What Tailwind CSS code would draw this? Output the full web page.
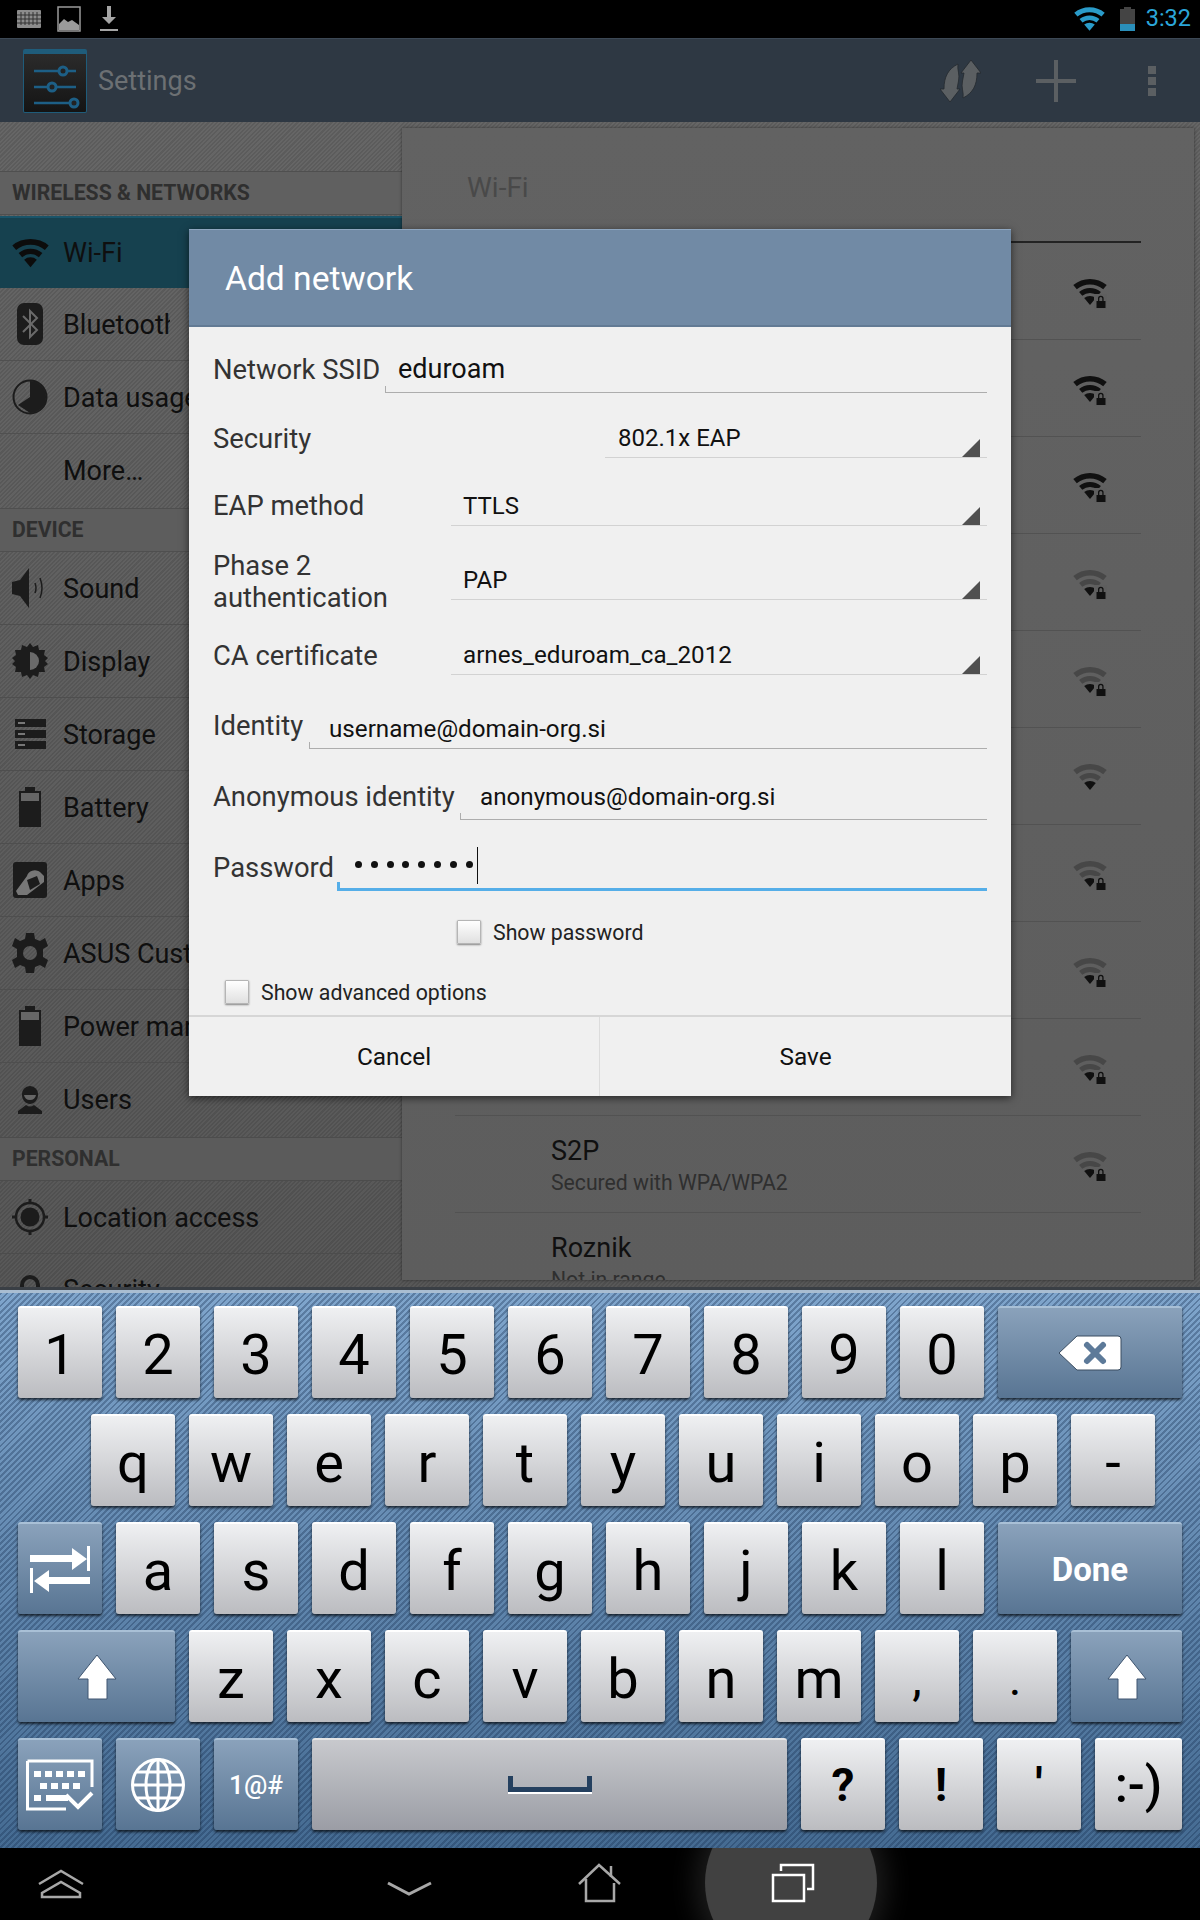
<!doctype html>
<html>
<head>
<meta charset="utf-8">
<script src="https://cdn.jsdelivr.net/npm/@tailwindcss/browser@4"></script>
<title>Add network</title>
</head>
<body class="m-0 bg-black">
<svg class="hidden" width="0" height="0">
  <symbol id="w-full" viewBox="0 0 34 26"><path d="M.3 6.1A26 26 0 0 1 33.7 6.1L30.2 10.3A20.5 20.5 0 0 0 3.8 10.3Z"/><path d="M6.1 13A17 17 0 0 1 27.9 13L24.7 16.8A12 12 0 0 0 9.3 16.8Z"/><path d="M11.2 19.1A9 9 0 0 1 22.8 19.1L17 26Z"/></symbol>
  <symbol id="w-lock" viewBox="0 0 34 30"><path fill="#101010" d="M.3 6.1A26 26 0 0 1 33.7 6.1L30.2 10.3A20.5 20.5 0 0 0 3.8 10.3Z"/><path fill="#101010" d="M6.1 13A17 17 0 0 1 27.900 13L24.700 16.800A12 12 0 0 0 9.300 16.800Z"/><path fill="#101010" d="M11.200 19.100A9 9 0 0 1 22.800 19.100L17 26Z"/><path fill="#5f5f5f" d="M21 15H34V30H21Z"/><path fill="#101010" d="M25 22V19.500a2.800 2.800 0 0 1 5.600 0V22H32.500V29H23.500V22ZM26.300 22H29.300V19.500a1.500 1.500 0 0 0-3 0Z"/></symbol>
  <symbol id="w-low" viewBox="0 0 34 30"><path fill="#474747" d="M.3 6.1A26 26 0 0 1 33.7 6.1L30.2 10.3A20.5 20.5 0 0 0 3.8 10.3Z"/><path fill="#474747" d="M6.1 13A17 17 0 0 1 27.9 13L24.7 16.8A12 12 0 0 0 9.3 16.8Z"/><path fill="#101010" d="M11.2 19.100A9 9 0 0 1 22.800 19.100L17 26Z"/><path fill="#5e5e5e" d="M21 15H34V30H21Z"/><path fill="#101010" d="M25 22V19.5a2.800 2.800 0 0 1 5.600 0V22H32.500V29H23.500V22ZM26.300 22H29.300V19.500a1.500 1.500 0 0 0-3 0Z"/></symbol>
  <symbol id="w-open" viewBox="0 0 34 30"><path fill="#474747" d="M.3 6.1A26 26 0 0 1 33.7 6.1L30.2 10.3A20.5 20.5 0 0 0 3.8 10.3Z"/><path fill="#474747" d="M6.1 13A17 17 0 0 1 27.9 13L24.7 16.8A12 12 0 0 0 9.3 16.8Z"/><path fill="#101010" d="M11.2 19.100A9 9 0 0 1 22.800 19.100L17 26Z"/></symbol>
  <symbol id="up" viewBox="0 0 40 46"><path fill="#fff" stroke="#3f5570" stroke-width="1" d="M20 1L39 25H30V45H11V25H1Z"/></symbol>
</svg>

<div class="relative w-[1200px] h-[1920px] overflow-hidden flex flex-col bg-black font-['Roboto',sans-serif]">

  <!-- status bar -->
  <div class="h-[38px] shrink-0 bg-black flex items-center pl-[17px] pr-[9px]">
    <svg width="24" height="18" viewBox="0 0 24 18" class="mr-[16px]"><rect width="24" height="18" rx="1" fill="#8c8c8c"/><path stroke="#333" stroke-width="1" d="M0 5h24M0 9h24M0 13h24M4 2v13M8 2v13M12 2v13M16 2v13M20 2v13" fill="none"/></svg>
    <svg width="24" height="26" viewBox="0 0 24 26" class="mr-[19px]"><rect x="1" y="1" width="22" height="24" fill="none" stroke="#9a9a9a" stroke-width="1.500"/><path fill="#9a9a9a" d="M2 24V18L7 13L11 16L15 14L22 19V24Z"/></svg>
    <svg width="18" height="26" viewBox="0 0 18 26"><path fill="#a5a5a5" d="M7 0H11V11H16L9 18L2 11H7ZM0 23H18V25H0Z"/></svg>
    <div class="flex-1"></div>
    <svg width="31" height="24" class="fill-[#2a9bc9] mr-[15px]"><use href="#w-full"/></svg>
    <div class="w-[15px] h-[24px] mr-[11px] flex flex-col items-center">
      <div class="w-[7px] h-[2px] bg-[#444]"></div>
      <div class="w-[15px] h-[15px] bg-[#444]"></div>
      <div class="w-[15px] h-[7px] bg-[#2a8fba]"></div>
    </div>
    <div class="text-[23.500px] leading-none text-[#2ba6d9]">3:32</div>
  </div>

  <!-- action bar -->
  <div class="h-[84px] shrink-0 bg-[#2e3843] border-t border-[#3c4855] flex items-center pl-[23px] pr-[44px]">
    <div class="w-[64px] h-[64px] rounded-[2px] border border-[#1f5c7a] border-t-[5px] bg-[linear-gradient(#2b2b2b,#141414)] mr-[11px] shrink-0">
      <svg width="62" height="58" viewBox="0 0 62 58"><g stroke="#1d5f86" stroke-width="2.500" fill="none"><path d="M10 17H52M10 33H52M10 49H52"/><circle cx="39" cy="17" r="4" fill="#222" stroke-width="3"/><circle cx="28" cy="33" r="4" fill="#222" stroke-width="3"/><circle cx="50" cy="49" r="4" fill="#222" stroke-width="3"/></g></svg>
    </div>
    <div class="text-[27px] pt-[2px] text-[#6c7073]">Settings</div>
    <div class="flex-1"></div>
    <svg width="41" height="42" viewBox="0 0 41 42" class="mr-[55px]"><g fill="#5b5f62" stroke="#24292f" stroke-width="0.800"><path d="M31 0L41 13H37C37 25 33 33 23 38C24 32 21 28 22.500 21L24 13H21Z"/><path d="M10 42L0 29H4C4 17 8 9 18 4C17 10 20 14 18.500 21L17 29H20Z"/></g></svg>
    <div class="relative w-[40px] h-[42px] mr-[72px]">
      <div class="absolute left-[18px] top-0 w-[4px] h-[42px] bg-[#5b5f62]"></div>
      <div class="absolute left-0 top-[19px] w-[40px] h-[4px] bg-[#5b5f62]"></div>
    </div>
    <div class="flex flex-col gap-[3px]">
      <div class="w-[8px] h-[8px] bg-[#5b5f62]"></div>
      <div class="w-[8px] h-[8px] bg-[#5b5f62]"></div>
      <div class="w-[8px] h-[8px] bg-[#5b5f62]"></div>
    </div>
  </div>

  <!-- settings content -->
  <div class="h-[1165px] shrink-0 flex overflow-hidden bg-[image:repeating-linear-gradient(135deg,rgba(0,0,0,0.1)_0,rgba(0,0,0,0.1)_1.500px,transparent_1.500px,transparent_3px),linear-gradient(#666666,#585858)]">
    <div class="w-[402px] shrink-0 pt-[49px] text-[#0f0f0f]">
      <div class="h-[44px] flex items-center pl-[12px] text-[21.200px] font-bold text-[#2f2f2f] bg-[#606060] border-t border-b border-[#4f4f4f]">WIRELESS &amp; NETWORKS</div>
      <div class="h-[72px] mt-[1px] flex items-center bg-[#16414f] border-t-2 border-[#1a5469]">
        <div class="w-[63px] flex justify-center pr-[3px]"><svg width="37" height="30" class="fill-[#0c0c0c]"><use href="#w-full"/></svg></div>
        <span class="text-[27px]">Wi-Fi</span>
      </div>
      <div class="h-[73px] flex items-center border-b border-[#505050]">
        <div class="w-[63px] flex justify-center pr-[3px]"><svg width="26" height="42" viewBox="0 0 26 42"><rect width="26" height="42" rx="7" fill="#1c1c1c"/><path d="M6 13L20 27L13 34V8L20 15L6 29" fill="none" stroke="#6a6a6a" stroke-width="2"/></svg></div>
        <span class="text-[27px] pt-[2px] w-[107px] overflow-hidden whitespace-nowrap">Bluetooth</span>
      </div>
      <div class="h-[73px] flex items-center border-b border-[#505050]">
        <div class="w-[63px] flex justify-center pr-[3px]"><svg width="36" height="36" viewBox="0 0 36 36"><circle cx="18" cy="18" r="16.500" fill="none" stroke="#1c1c1c" stroke-width="2"/><path fill="#1c1c1c" d="M18 2A16 16 0 0 1 18 34L6 26L18 18Z"/></svg></div>
        <span class="text-[27px] pt-[2px]">Data usage</span>
      </div>
      <div class="h-[74px] flex items-center"><div class="w-[63px]"></div><span class="text-[27px]">More…</span></div>
      <div class="h-[44px] flex items-center pl-[12px] text-[21.200px] font-bold text-[#2f2f2f] bg-[#5d5d5d] border-t border-b border-[#4f4f4f]">DEVICE</div>
      <div class="h-[73px] flex items-center border-b border-[#4e4e4e]">
        <div class="w-[63px] flex justify-center pr-[3px]"><svg width="36" height="40" viewBox="0 0 36 40"><path fill="#1c1c1c" d="M0 14L8 12L17 0V40L8 28L0 26Z"/><path fill="none" stroke="#1c1c1c" stroke-width="1.500" d="M23 15Q25 20 23 25M28 10Q32 20 28 30"/></svg></div>
        <span class="text-[27px] pt-[2px]">Sound</span>
      </div>
      <div class="h-[73px] flex items-center border-b border-[#4e4e4e]">
        <div class="w-[63px] flex justify-center pr-[3px]"><svg width="36" height="36" viewBox="0 0 36 36"><path fill="#1c1c1c" d="M18 0L21 4L26 2L27 7L33 7L32 12L36 15L33 18L36 21L32 24L33 29L27 29L26 34L21 32L18 36L15 32L10 34L9 29L3 29L4 24L0 21L3 18L0 15L4 12L3 7L9 7L10 2L15 4Z"/><path fill="#6a6a6a" d="M18 9A9 9 0 0 1 18 27Z"/></svg></div>
        <span class="text-[27px] pt-[2px]">Display</span>
      </div>
      <div class="h-[73px] flex items-center border-b border-[#4e4e4e]">
        <div class="w-[63px] flex justify-center pr-[3px]"><svg width="31" height="30" viewBox="0 0 31 30"><g fill="#1c1c1c"><rect width="31" height="8"/><rect y="11" width="31" height="8"/><rect y="22" width="31" height="8"/></g><g fill="#777"><rect x="3" y="3" width="7" height="2"/><rect x="3" y="14" width="7" height="2"/><rect x="3" y="25" width="7" height="2"/></g></svg></div>
        <span class="text-[27px] pt-[2px]">Storage</span>
      </div>
      <div class="h-[73px] flex items-center border-b border-[#4e4e4e]">
        <div class="w-[63px] flex justify-center pr-[3px]"><svg width="22" height="40" viewBox="0 0 22 40"><path fill="#1c1c1c" d="M6 0H16V4H22V40H0V4H6Z"/><rect x="2" y="6" width="18" height="8" fill="#666"/></svg></div>
        <span class="text-[27px] pt-[2px]">Battery</span>
      </div>
      <div class="h-[73px] flex items-center border-b border-[#4e4e4e]">
        <div class="w-[63px] flex justify-center pr-[3px]"><svg width="34" height="36" viewBox="0 0 34 36"><rect width="34" height="36" rx="3" fill="#1c1c1c"/><path fill="#777" d="M3 29L14 14A8 7 0 0 1 27 10L31 14V20L14 33H5Z"/><path fill="#1c1c1c" d="M14 18L24 14L27 22L17 28Z"/></svg></div>
        <span class="text-[27px] pt-[2px]">Apps</span>
      </div>
      <div class="h-[73px] flex items-center border-b border-[#4e4e4e]">
        <div class="w-[63px] flex justify-center pr-[3px]"><svg width="36" height="40" viewBox="0 0 36 40"><path fill="#1c1c1c" fill-rule="evenodd" d="M14 0H22L23 6L28 8L33 5L36 13L31 16V24L36 27L33 35L28 32L23 34L22 40H14L13 34L8 32L3 35L0 27L5 24V16L0 13L3 5L8 8L13 6ZM18 13A7 7 0 0 0 18 27A7 7 0 0 0 18 13Z"/></svg></div>
        <span class="text-[27px] pt-[2px] whitespace-nowrap">ASUS Customized Settings</span>
      </div>
      <div class="h-[73px] flex items-center border-b border-[#4e4e4e]">
        <div class="w-[63px] flex justify-center pr-[3px]"><svg width="22" height="40" viewBox="0 0 22 40"><path fill="#1c1c1c" d="M6 0H16V4H22V40H0V4H6Z"/><rect x="2" y="6" width="18" height="8" fill="#666"/></svg></div>
        <span class="text-[27px] pt-[2px] whitespace-nowrap">Power management</span>
      </div>
      <div class="h-[74px] flex items-center">
        <div class="w-[63px] flex justify-center pr-[3px]"><svg width="24" height="28" viewBox="0 0 24 28"><path fill="#1c1c1c" d="M12 0A8 8 0 0 1 20 9C20 14 16 18 12 18S4 14 4 9A8 8 0 0 1 12 0ZM8 19Q12 22 16 19L24 25V28H0V25Z"/><path fill="#666" d="M6 9H18Q17 14 12 14T6 9Z"/></svg></div>
        <span class="text-[27px]">Users</span>
      </div>
      <div class="h-[44px] flex items-center pl-[12px] text-[21.200px] font-bold text-[#2f2f2f] bg-[#5b5b5b] border-t border-b border-[#4c4c4c]">PERSONAL</div>
      <div class="h-[73px] flex items-center border-b border-[#4c4c4c]">
        <div class="w-[63px] flex justify-center pr-[3px]"><svg width="36" height="36" viewBox="0 0 36 36"><circle cx="18" cy="18" r="14" fill="none" stroke="#1c1c1c" stroke-width="2.500"/><circle cx="18" cy="18" r="9.500" fill="#1c1c1c"/><path stroke="#1c1c1c" stroke-width="3" d="M18 0V5M18 31V36M0 18H5M31 18H36"/></svg></div>
        <span class="text-[27px] pt-[2px]">Location access</span>
      </div>
      <div class="h-[73px] flex items-center">
        <div class="w-[63px] flex justify-center pr-[3px]"><svg width="24" height="36" viewBox="0 0 24 36"><path fill="none" stroke="#1c1c1c" stroke-width="4" d="M4 20V12A8 8 0 0 1 20 12V20"/><rect y="18" width="24" height="18" fill="#1c1c1c"/></svg></div>
        <span class="text-[27px]">Security</span>
      </div>
    </div>

    <!-- right panel -->
    <div class="mt-[6px] ml-0 w-[792px] h-[1152px] shrink-0 bg-[linear-gradient(#626262,#5d5d5d)] shadow-[0_0_3px_rgba(0,0,0,0.45)] overflow-hidden pl-[53px] pr-[53px]">
      <div class="h-[115px] pl-[12px] pt-[45px] text-[28px] leading-[30px] text-[#494949] border-b-2 border-[#232323]">Wi-Fi</div>
      <div class="h-[97px] pt-[5px] border-b border-[#525252] flex items-center justify-end pr-[34px]"><svg width="34" height="30"><use href="#w-lock"/></svg></div>
      <div class="h-[97px] pt-[5px] border-b border-[#525252] flex items-center justify-end pr-[34px]"><svg width="34" height="30"><use href="#w-lock"/></svg></div>
      <div class="h-[97px] pt-[5px] border-b border-[#525252] flex items-center justify-end pr-[34px]"><svg width="34" height="30"><use href="#w-lock"/></svg></div>
      <div class="h-[97px] pt-[5px] border-b border-[#525252] flex items-center justify-end pr-[34px]"><svg width="34" height="30"><use href="#w-low"/></svg></div>
      <div class="h-[97px] pt-[5px] border-b border-[#525252] flex items-center justify-end pr-[34px]"><svg width="34" height="30"><use href="#w-low"/></svg></div>
      <div class="h-[97px] pt-[5px] border-b border-[#525252] flex items-center justify-end pr-[34px]"><svg width="34" height="30"><use href="#w-open"/></svg></div>
      <div class="h-[97px] pt-[5px] border-b border-[#525252] flex items-center justify-end pr-[34px]"><svg width="34" height="30"><use href="#w-low"/></svg></div>
      <div class="h-[97px] pt-[5px] border-b border-[#525252] flex items-center justify-end pr-[34px]"><svg width="34" height="30"><use href="#w-low"/></svg></div>
      <div class="h-[97px] pt-[5px] border-b border-[#525252] flex items-center justify-end pr-[34px]"><svg width="34" height="30"><use href="#w-low"/></svg></div>
      <div class="h-[97px] border-b border-[#525252] flex items-center justify-between pl-[96px] pr-[34px]">
        <div class="pt-[2px]">
          <div class="text-[27px] leading-[32px] text-[#101010]">S2P</div>
          <div class="text-[21.200px] leading-[26px] mt-[3px] text-[#2f2f2f]">Secured with WPA/WPA2</div>
        </div>
        <svg width="34" height="30" class="mt-[5px]"><use href="#w-low"/></svg>
      </div>
      <div class="h-[97px] pl-[96px] pt-[19px]">
        <div class="text-[27px] leading-[32px] text-[#101010]">Roznik</div>
        <div class="text-[21.200px] leading-[26px] mt-[3px] text-[#2f2f2f]">Not in range</div>
      </div>
    </div>
  </div>

  <!-- divider above keyboard -->
  <div class="h-[3px] shrink-0 bg-[#3a3f45]"></div>

  <!-- keyboard -->
  <div class="h-[558px] shrink-0 border-t-[3px] border-[#a9bdd1] pt-[13px] pl-[18px] flex flex-col gap-[16px] bg-[image:repeating-linear-gradient(135deg,rgba(25,50,85,0.35)_0,rgba(25,50,85,0.35)_2px,transparent_2px,transparent_4.300px),linear-gradient(#7fa5cc,#456b92)]">
    <div class="flex gap-[14px] h-[92px]">
      <div class="w-[84px] pt-1 flex items-center justify-center rounded-[3px] border-t-2 border-white bg-[linear-gradient(#eff0f2,#bbbcc0)] shadow-[0_2px_3px_rgba(0,0,0,0.7)] text-[56px] text-black">1</div>
      <div class="w-[84px] pt-1 flex items-center justify-center rounded-[3px] border-t-2 border-white bg-[linear-gradient(#eff0f2,#bbbcc0)] shadow-[0_2px_3px_rgba(0,0,0,0.7)] text-[56px] text-black">2</div>
      <div class="w-[84px] pt-1 flex items-center justify-center rounded-[3px] border-t-2 border-white bg-[linear-gradient(#eff0f2,#bbbcc0)] shadow-[0_2px_3px_rgba(0,0,0,0.7)] text-[56px] text-black">3</div>
      <div class="w-[84px] pt-1 flex items-center justify-center rounded-[3px] border-t-2 border-white bg-[linear-gradient(#eff0f2,#bbbcc0)] shadow-[0_2px_3px_rgba(0,0,0,0.7)] text-[56px] text-black">4</div>
      <div class="w-[84px] pt-1 flex items-center justify-center rounded-[3px] border-t-2 border-white bg-[linear-gradient(#eff0f2,#bbbcc0)] shadow-[0_2px_3px_rgba(0,0,0,0.7)] text-[56px] text-black">5</div>
      <div class="w-[84px] pt-1 flex items-center justify-center rounded-[3px] border-t-2 border-white bg-[linear-gradient(#eff0f2,#bbbcc0)] shadow-[0_2px_3px_rgba(0,0,0,0.7)] text-[56px] text-black">6</div>
      <div class="w-[84px] pt-1 flex items-center justify-center rounded-[3px] border-t-2 border-white bg-[linear-gradient(#eff0f2,#bbbcc0)] shadow-[0_2px_3px_rgba(0,0,0,0.7)] text-[56px] text-black">7</div>
      <div class="w-[84px] pt-1 flex items-center justify-center rounded-[3px] border-t-2 border-white bg-[linear-gradient(#eff0f2,#bbbcc0)] shadow-[0_2px_3px_rgba(0,0,0,0.7)] text-[56px] text-black">8</div>
      <div class="w-[84px] pt-1 flex items-center justify-center rounded-[3px] border-t-2 border-white bg-[linear-gradient(#eff0f2,#bbbcc0)] shadow-[0_2px_3px_rgba(0,0,0,0.7)] text-[56px] text-black">9</div>
      <div class="w-[84px] pt-1 flex items-center justify-center rounded-[3px] border-t-2 border-white bg-[linear-gradient(#eff0f2,#bbbcc0)] shadow-[0_2px_3px_rgba(0,0,0,0.7)] text-[56px] text-black">0</div>
      <div class="w-[184px] flex items-center justify-center rounded-[3px] border-t-2 border-[#a9c0d6] bg-[linear-gradient(#8aa2bb,#587593)] shadow-[0_2px_3px_rgba(0,0,0,0.7)]">
        <svg width="64" height="36" viewBox="0 0 64 36"><path fill="#fff" stroke="#3a4c60" stroke-width="1" d="M19 1H60Q63 1 63 4V32Q63 35 60 35H19L1 18Z"/><path stroke="#5d7a99" stroke-width="6" stroke-linecap="round" d="M29 10L45 26M45 10L29 26"/></svg>
      </div>
    </div>
    <div class="flex gap-[14px] h-[92px] pl-[73px]">
      <div class="w-[84px] pt-1 flex items-center justify-center rounded-[3px] border-t-2 border-white bg-[linear-gradient(#eff0f2,#bbbcc0)] shadow-[0_2px_3px_rgba(0,0,0,0.7)] text-[56px] text-black">q</div>
      <div class="w-[84px] pt-1 flex items-center justify-center rounded-[3px] border-t-2 border-white bg-[linear-gradient(#eff0f2,#bbbcc0)] shadow-[0_2px_3px_rgba(0,0,0,0.7)] text-[56px] text-black">w</div>
      <div class="w-[84px] pt-1 flex items-center justify-center rounded-[3px] border-t-2 border-white bg-[linear-gradient(#eff0f2,#bbbcc0)] shadow-[0_2px_3px_rgba(0,0,0,0.7)] text-[56px] text-black">e</div>
      <div class="w-[84px] pt-1 flex items-center justify-center rounded-[3px] border-t-2 border-white bg-[linear-gradient(#eff0f2,#bbbcc0)] shadow-[0_2px_3px_rgba(0,0,0,0.7)] text-[56px] text-black">r</div>
      <div class="w-[84px] pt-1 flex items-center justify-center rounded-[3px] border-t-2 border-white bg-[linear-gradient(#eff0f2,#bbbcc0)] shadow-[0_2px_3px_rgba(0,0,0,0.7)] text-[56px] text-black">t</div>
      <div class="w-[84px] pt-1 flex items-center justify-center rounded-[3px] border-t-2 border-white bg-[linear-gradient(#eff0f2,#bbbcc0)] shadow-[0_2px_3px_rgba(0,0,0,0.7)] text-[56px] text-black">y</div>
      <div class="w-[84px] pt-1 flex items-center justify-center rounded-[3px] border-t-2 border-white bg-[linear-gradient(#eff0f2,#bbbcc0)] shadow-[0_2px_3px_rgba(0,0,0,0.7)] text-[56px] text-black">u</div>
      <div class="w-[84px] pt-1 flex items-center justify-center rounded-[3px] border-t-2 border-white bg-[linear-gradient(#eff0f2,#bbbcc0)] shadow-[0_2px_3px_rgba(0,0,0,0.7)] text-[56px] text-black">i</div>
      <div class="w-[84px] pt-1 flex items-center justify-center rounded-[3px] border-t-2 border-white bg-[linear-gradient(#eff0f2,#bbbcc0)] shadow-[0_2px_3px_rgba(0,0,0,0.7)] text-[56px] text-black">o</div>
      <div class="w-[84px] pt-1 flex items-center justify-center rounded-[3px] border-t-2 border-white bg-[linear-gradient(#eff0f2,#bbbcc0)] shadow-[0_2px_3px_rgba(0,0,0,0.7)] text-[56px] text-black">p</div>
      <div class="w-[84px] pt-1 flex items-center justify-center rounded-[3px] border-t-2 border-white bg-[linear-gradient(#eff0f2,#bbbcc0)] shadow-[0_2px_3px_rgba(0,0,0,0.7)] text-[56px] text-black">-</div>
    </div>
    <div class="flex gap-[14px] h-[92px]">
      <div class="w-[84px] flex items-center justify-center rounded-[3px] border-t-2 border-[#a9c0d6] bg-[linear-gradient(#8aa2bb,#587593)] shadow-[0_2px_3px_rgba(0,0,0,0.7)]">
        <svg width="60" height="47" viewBox="0 0 60 47"><path fill="#fff" d="M0 9H42V2L57 13L42 24V16H0ZM57 0H60V25H57ZM0 22H3V47H0ZM60 31V38H19V46L4 35L19 24V31Z"/></svg>
      </div>
      <div class="w-[84px] pt-1 flex items-center justify-center rounded-[3px] border-t-2 border-white bg-[linear-gradient(#eff0f2,#bbbcc0)] shadow-[0_2px_3px_rgba(0,0,0,0.7)] text-[56px] text-black">a</div>
      <div class="w-[84px] pt-1 flex items-center justify-center rounded-[3px] border-t-2 border-white bg-[linear-gradient(#eff0f2,#bbbcc0)] shadow-[0_2px_3px_rgba(0,0,0,0.7)] text-[56px] text-black">s</div>
      <div class="w-[84px] pt-1 flex items-center justify-center rounded-[3px] border-t-2 border-white bg-[linear-gradient(#eff0f2,#bbbcc0)] shadow-[0_2px_3px_rgba(0,0,0,0.7)] text-[56px] text-black">d</div>
      <div class="w-[84px] pt-1 flex items-center justify-center rounded-[3px] border-t-2 border-white bg-[linear-gradient(#eff0f2,#bbbcc0)] shadow-[0_2px_3px_rgba(0,0,0,0.7)] text-[56px] text-black">f</div>
      <div class="w-[84px] pt-1 flex items-center justify-center rounded-[3px] border-t-2 border-white bg-[linear-gradient(#eff0f2,#bbbcc0)] shadow-[0_2px_3px_rgba(0,0,0,0.7)] text-[56px] text-black">g</div>
      <div class="w-[84px] pt-1 flex items-center justify-center rounded-[3px] border-t-2 border-white bg-[linear-gradient(#eff0f2,#bbbcc0)] shadow-[0_2px_3px_rgba(0,0,0,0.7)] text-[56px] text-black">h</div>
      <div class="w-[84px] pt-1 flex items-center justify-center rounded-[3px] border-t-2 border-white bg-[linear-gradient(#eff0f2,#bbbcc0)] shadow-[0_2px_3px_rgba(0,0,0,0.7)] text-[56px] text-black">j</div>
      <div class="w-[84px] pt-1 flex items-center justify-center rounded-[3px] border-t-2 border-white bg-[linear-gradient(#eff0f2,#bbbcc0)] shadow-[0_2px_3px_rgba(0,0,0,0.7)] text-[56px] text-black">k</div>
      <div class="w-[84px] pt-1 flex items-center justify-center rounded-[3px] border-t-2 border-white bg-[linear-gradient(#eff0f2,#bbbcc0)] shadow-[0_2px_3px_rgba(0,0,0,0.7)] text-[56px] text-black">l</div>
      <div class="w-[184px] pt-[2px] flex items-center justify-center rounded-[3px] border-t-2 border-[#a9c0d6] bg-[linear-gradient(#8aa2bb,#587593)] shadow-[0_2px_3px_rgba(0,0,0,0.7)] text-[33px] font-bold text-white">Done</div>
    </div>
    <div class="flex gap-[14px] h-[92px]">
      <div class="w-[157px] flex items-center justify-center rounded-[3px] border-t-2 border-[#a9c0d6] bg-[linear-gradient(#8aa2bb,#587593)] shadow-[0_2px_3px_rgba(0,0,0,0.7)]"><svg width="40" height="46"><use href="#up"/></svg></div>
      <div class="w-[84px] pt-1 flex items-center justify-center rounded-[3px] border-t-2 border-white bg-[linear-gradient(#eff0f2,#bbbcc0)] shadow-[0_2px_3px_rgba(0,0,0,0.7)] text-[56px] text-black">z</div>
      <div class="w-[84px] pt-1 flex items-center justify-center rounded-[3px] border-t-2 border-white bg-[linear-gradient(#eff0f2,#bbbcc0)] shadow-[0_2px_3px_rgba(0,0,0,0.7)] text-[56px] text-black">x</div>
      <div class="w-[84px] pt-1 flex items-center justify-center rounded-[3px] border-t-2 border-white bg-[linear-gradient(#eff0f2,#bbbcc0)] shadow-[0_2px_3px_rgba(0,0,0,0.7)] text-[56px] text-black">c</div>
      <div class="w-[84px] pt-1 flex items-center justify-center rounded-[3px] border-t-2 border-white bg-[linear-gradient(#eff0f2,#bbbcc0)] shadow-[0_2px_3px_rgba(0,0,0,0.7)] text-[56px] text-black">v</div>
      <div class="w-[84px] pt-1 flex items-center justify-center rounded-[3px] border-t-2 border-white bg-[linear-gradient(#eff0f2,#bbbcc0)] shadow-[0_2px_3px_rgba(0,0,0,0.7)] text-[56px] text-black">b</div>
      <div class="w-[84px] pt-1 flex items-center justify-center rounded-[3px] border-t-2 border-white bg-[linear-gradient(#eff0f2,#bbbcc0)] shadow-[0_2px_3px_rgba(0,0,0,0.7)] text-[56px] text-black">n</div>
      <div class="w-[84px] pt-1 flex items-center justify-center rounded-[3px] border-t-2 border-white bg-[linear-gradient(#eff0f2,#bbbcc0)] shadow-[0_2px_3px_rgba(0,0,0,0.7)] text-[56px] text-black">m</div>
      <div class="w-[84px] pt-1 flex items-center justify-center rounded-[3px] border-t-2 border-white bg-[linear-gradient(#eff0f2,#bbbcc0)] shadow-[0_2px_3px_rgba(0,0,0,0.7)] text-[48px] text-black">,</div>
      <div class="w-[84px] pt-1 flex items-center justify-center rounded-[3px] border-t-2 border-white bg-[linear-gradient(#eff0f2,#bbbcc0)] shadow-[0_2px_3px_rgba(0,0,0,0.7)] text-[48px] text-black">.</div>
      <div class="w-[111px] flex items-center justify-center rounded-[3px] border-t-2 border-[#a9c0d6] bg-[linear-gradient(#8aa2bb,#587593)] shadow-[0_2px_3px_rgba(0,0,0,0.7)]"><svg width="40" height="46"><use href="#up"/></svg></div>
    </div>
    <div class="flex gap-[14px] h-[92px]">
      <div class="w-[84px] flex items-center justify-center rounded-[3px] border-t-2 border-[#a9c0d6] bg-[linear-gradient(#8aa2bb,#587593)] shadow-[0_2px_3px_rgba(0,0,0,0.7)]">
        <svg width="68" height="52" viewBox="0 0 68 52"><path fill="none" stroke="#fff" stroke-width="3" d="M1.500 2H66V28M1.500 2V50H40"/><g fill="#fff"><path d="M8 12h7v6H8zM19 12h7v6h-7zM30 12h7v6h-7zM41 12h7v6h-7zM52 12h7v6h-7zM14 24h7v6h-7zM25 24h7v6h-7zM36 24h7v6h-7zM47 24h7v6h-7zM8 36h7v6H8zM20 36h22v6H20z"/></g><path fill="none" stroke="#fff" stroke-width="4" d="M40 36L52 48L66 34"/></svg>
      </div>
      <div class="w-[84px] flex items-center justify-center rounded-[3px] border-t-2 border-[#a9c0d6] bg-[linear-gradient(#8aa2bb,#587593)] shadow-[0_2px_3px_rgba(0,0,0,0.7)]">
        <svg width="54" height="56" viewBox="0 0 54 56"><g fill="none" stroke="#fff" stroke-width="3"><circle cx="27" cy="28" r="25.500"/><ellipse cx="27" cy="28" rx="12" ry="25.500"/><path d="M27 2V54M2 28H52M6 15H48M6 41H48"/></g></svg>
      </div>
      <div class="w-[84px] flex items-center justify-center rounded-[3px] border-t-2 border-[#a9c0d6] bg-[linear-gradient(#8aa2bb,#587593)] shadow-[0_2px_3px_rgba(0,0,0,0.7)] text-[26px] font-medium text-white">1@#</div>
      <div class="w-[475px] flex items-center justify-center rounded-[3px] border-t-2 border-[#e6e6e6] bg-[linear-gradient(#c8c9cd,#9b9da5)] shadow-[0_2px_3px_rgba(0,0,0,0.7)]">
        <svg width="84" height="18" viewBox="0 0 84 18"><path fill="#fff" d="M0 16H84V18H0Z"/><path fill="#24405f" d="M0 0H5V11H79V0H84V16H0Z"/></svg>
      </div>
      <div class="w-[84px] flex items-center justify-center rounded-[3px] border-t-2 border-white bg-[linear-gradient(#eff0f2,#bbbcc0)] shadow-[0_2px_3px_rgba(0,0,0,0.7)] text-[46px] font-bold text-black">?</div>
      <div class="w-[84px] flex items-center justify-center rounded-[3px] border-t-2 border-white bg-[linear-gradient(#eff0f2,#bbbcc0)] shadow-[0_2px_3px_rgba(0,0,0,0.7)] text-[46px] font-bold text-black">!</div>
      <div class="w-[84px] flex items-center justify-center rounded-[3px] border-t-2 border-white bg-[linear-gradient(#eff0f2,#bbbcc0)] shadow-[0_2px_3px_rgba(0,0,0,0.7)] text-[46px] font-bold text-black">'</div>
      <div class="w-[87px] flex items-center justify-center rounded-[3px] border-t-2 border-white bg-[linear-gradient(#eff0f2,#bbbcc0)] shadow-[0_2px_3px_rgba(0,0,0,0.7)] text-[50px] font-medium text-black">:-)</div>
    </div>
  </div>

  <!-- navigation bar -->
  <div class="relative flex-1 bg-black overflow-hidden">
    <div class="absolute left-[705px] top-[-51px] w-[172px] h-[172px] rounded-full bg-[#414141] shadow-[0_0_28px_8px_rgba(255,255,255,0.12)]"></div>
    <svg class="absolute left-[38px] top-[21px]" width="46" height="30" viewBox="0 0 46 30" fill="none" stroke="#a8a8a8" stroke-width="2.500"><path d="M1 15L23 2L45 15"/><path d="M4 28V24L23 13L42 24V28H4Z"/></svg>
    <svg class="absolute left-[387px] top-[33px]" width="45" height="16" viewBox="0 0 45 16" fill="none" stroke="#a8a8a8" stroke-width="3"><path d="M1 2L22 13L44 2"/></svg>
    <svg class="absolute left-[578px] top-[15px]" width="44" height="42" viewBox="0 0 44 42" fill="none" stroke="#a8a8a8" stroke-width="2.500"><path d="M1 21L21 2L42 21"/><path d="M8 16V38H36V20"/><path d="M33 3V14"/></svg>
    <svg class="absolute left-[771px] top-[15px]" width="44" height="40" viewBox="0 0 44 40" fill="none" stroke="#fff" stroke-width="2.500"><rect x="2" y="12" width="31" height="26"/><path d="M10 8V2H42V26H36"/></svg>
  </div>

  <!-- dialog -->
  <div class="absolute left-[189px] top-[229px] w-[822px] h-[867px] bg-[#f0f0f0] shadow-[0_2px_8px_rgba(0,0,0,0.6)] flex flex-col">
    <div class="h-[98px] shrink-0 bg-[#718aa5] border-t border-[#8ea6bf] border-b-2 border-b-[#627a94] flex items-center pl-[36px] pt-[3px] text-[33.600px] text-white">Add network</div>
    <div class="flex-1 px-[24px] flex flex-col text-[27.400px] text-[#333]">
      <div class="mt-[18px] h-[48px] flex items-center">
        <div class="w-[172px] shrink-0 pt-[3px] whitespace-nowrap">Network SSID</div>
        <div class="relative flex-1 h-[48px] flex items-center pl-[13px] pt-[1px] text-[27px] text-[#111] border-b border-[#adadad]">eduroam<span class="absolute left-0 bottom-0 h-[6px] border-l border-[#adadad]"></span></div>
      </div>
      <div class="mt-[22px] h-[48px] flex items-center">
        <div class="w-[392px] shrink-0 pt-[2px]">Security</div>
        <div class="relative flex-1 self-start h-[43px] pt-[3px] flex items-center pl-[13px] text-[24px] text-[#111] border-b border-[#d2d2d2]">802.1x EAP<svg class="absolute right-[7px] bottom-0" width="18" height="18"><path fill="#505050" d="M18 0V18H0Z"/></svg></div>
      </div>
      <div class="mt-[19px] h-[48px] flex items-center">
        <div class="w-[238px] shrink-0 pt-[2px]">EAP method</div>
        <div class="relative flex-1 self-start h-[44px] pt-[4px] flex items-center pl-[12px] text-[24px] text-[#111] border-b border-[#d2d2d2]">TTLS<svg class="absolute right-[7px] bottom-0" width="18" height="18"><path fill="#505050" d="M18 0V18H0Z"/></svg></div>
      </div>
      <div class="mt-[19px] h-[64px] flex items-center">
        <div class="w-[238px] shrink-0 leading-[32px] pt-[1px]">Phase 2<br>authentication</div>
        <div class="relative flex-1 self-start h-[51px] pt-[11px] flex items-center pl-[12px] text-[24px] text-[#111] border-b border-[#d2d2d2]">PAP<svg class="absolute right-[7px] bottom-0" width="18" height="18"><path fill="#505050" d="M18 0V18H0Z"/></svg></div>
      </div>
      <div class="mt-[19px] h-[48px] flex items-center">
        <div class="w-[238px] shrink-0 pt-[2px]">CA certificate</div>
        <div class="relative flex-1 self-start h-[43px] pt-[5px] flex items-center pl-[12px] text-[24.200px] text-[#111] border-b border-[#d2d2d2]">arnes_eduroam_ca_2012<svg class="absolute right-[7px] bottom-0" width="18" height="18"><path fill="#505050" d="M18 0V18H0Z"/></svg></div>
      </div>
      <div class="mt-[22px] h-[48px] flex items-center">
        <div class="w-[96px] shrink-0 pt-[2px]">Identity</div>
        <div class="relative flex-1 self-start h-[47px] pt-[9px] flex items-center pl-[20px] text-[24.200px] text-[#111] border-b border-[#adadad]">username@domain-org.si<span class="absolute left-0 bottom-0 h-[6px] border-l border-[#adadad]"></span></div>
      </div>
      <div class="mt-[23px] h-[48px] flex items-center">
        <div class="w-[247px] shrink-0 pt-[2px] whitespace-nowrap">Anonymous identity</div>
        <div class="relative flex-1 self-start h-[47px] pt-[3px] flex items-center pl-[20px] text-[24.200px] text-[#111] border-b border-[#adadad]">anonymous@domain-org.si<span class="absolute left-0 bottom-0 h-[6px] border-l border-[#adadad]"></span></div>
      </div>
      <div class="mt-[23px] h-[48px] flex items-center">
        <div class="w-[124px] shrink-0 pt-[2px]">Password</div>
        <div class="relative flex-1 self-start h-[47px] flex items-center gap-[8.800px] pl-[18px] border-b-[3px] border-[#55aee8]">
          <span class="w-[7px] h-[7px] rounded-full bg-[#111] -mt-[3px]"></span>
          <span class="w-[7px] h-[7px] rounded-full bg-[#111] -mt-[3px]"></span>
          <span class="w-[7px] h-[7px] rounded-full bg-[#111] -mt-[3px]"></span>
          <span class="w-[7px] h-[7px] rounded-full bg-[#111] -mt-[3px]"></span>
          <span class="w-[7px] h-[7px] rounded-full bg-[#111] -mt-[3px]"></span>
          <span class="w-[7px] h-[7px] rounded-full bg-[#111] -mt-[3px]"></span>
          <span class="w-[7px] h-[7px] rounded-full bg-[#111] -mt-[3px]"></span>
          <span class="w-[7px] h-[7px] rounded-full bg-[#111] -mt-[3px]"></span>
          <span class="absolute left-[140px] top-[3px] h-[37px] w-[1px] bg-[#111]"></span>
          <span class="absolute left-0 bottom-0 h-[6px] border-l-[3px] border-[#55aee8]"></span>
        </div>
      </div>
      <div class="mt-[28px] h-[24px] flex items-center pl-[244px] gap-[12px] text-[21.300px] text-[#222]">
        <span class="w-[24px] h-[24px] rounded-[1px] border border-[#b5b5b5] bg-[linear-gradient(#ffffff,#e0e0e0)] shadow-[0_1px_2px_rgba(0,0,0,0.45)]"></span><span class="pt-[2px]">Show password</span>
      </div>
      <div class="mt-[36px] h-[24px] flex items-center pl-[12px] gap-[12px] text-[21.300px] text-[#222]">
        <span class="w-[24px] h-[24px] rounded-[1px] border border-[#b5b5b5] bg-[linear-gradient(#ffffff,#e0e0e0)] shadow-[0_1px_2px_rgba(0,0,0,0.45)]"></span><span class="pt-[2px]">Show advanced options</span>
      </div>
    </div>
    <div class="h-[81px] shrink-0 border-t-2 border-[#d6d6d6] flex text-[24.400px] text-[#111]">
      <div class="w-[411px] pt-[2px] flex items-center justify-center border-r border-[#dcdcdc]">Cancel</div>
      <div class="flex-1 pt-[2px] flex items-center justify-center">Save</div>
    </div>
  </div>
</div>
</body>
</html>
